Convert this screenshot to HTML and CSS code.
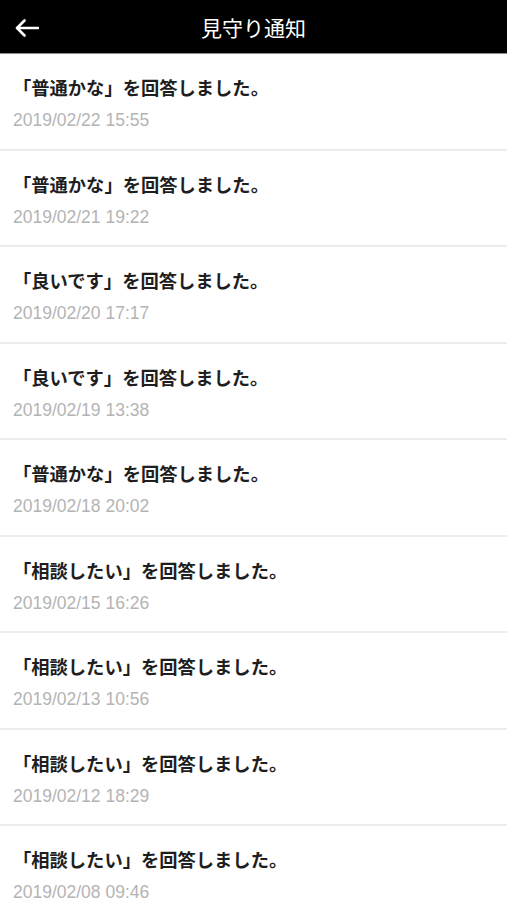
FILE: index.html
```html
<!DOCTYPE html>
<html lang="ja">
<head>
    <meta charset="UTF-8">
    <meta name="viewport" content="width=device-width, initial-scale=1.0">
    <title>見守り通知</title>
    <link rel="stylesheet" href="styles.css">
</head>
<body>
    <header class="app-bar">
        <span class="back">
            <svg width="24" height="18" viewBox="0 0 24 18">
                <path d="M23 9H2.5M9.5 1.5L2 9l7.5 7.5" fill="none" stroke="#fff" stroke-width="2.6" stroke-linecap="round" stroke-linejoin="round"/>
            </svg>
        </span>
        <h1 class="app-title">見守り通知</h1>
    </header>

    <ul class="notice-list">
        <li class="notice">
            <p class="notice-text">「普通かな」を回答しました。</p>
            <p class="notice-date">2019/02/22 15:55</p>
        </li>
        <li class="notice">
            <p class="notice-text">「普通かな」を回答しました。</p>
            <p class="notice-date">2019/02/21 19:22</p>
        </li>
        <li class="notice">
            <p class="notice-text">「良いです」を回答しました。</p>
            <p class="notice-date">2019/02/20 17:17</p>
        </li>
        <li class="notice">
            <p class="notice-text">「良いです」を回答しました。</p>
            <p class="notice-date">2019/02/19 13:38</p>
        </li>
        <li class="notice">
            <p class="notice-text">「普通かな」を回答しました。</p>
            <p class="notice-date">2019/02/18 20:02</p>
        </li>
        <li class="notice">
            <p class="notice-text">「相談したい」を回答しました。</p>
            <p class="notice-date">2019/02/15 16:26</p>
        </li>
        <li class="notice">
            <p class="notice-text">「相談したい」を回答しました。</p>
            <p class="notice-date">2019/02/13 10:56</p>
        </li>
        <li class="notice">
            <p class="notice-text">「相談したい」を回答しました。</p>
            <p class="notice-date">2019/02/12 18:29</p>
        </li>
        <li class="notice">
            <p class="notice-text">「相談したい」を回答しました。</p>
            <p class="notice-date">2019/02/08 09:46</p>
        </li>
    </ul>
</body>
</html>
```

FILE: styles.css
```css
body {
    margin: 0;
    padding: 0;
    background-color: #fff;
    color: #222;
    font-family: "Liberation Sans", "Noto Sans CJK JP", sans-serif;
}

.app-bar {
    position: relative;
    height: 53px;
    background-color: #000;
    border-bottom: 1px solid #8a8a8a;
    display: flex;
    align-items: center;
    justify-content: center;
}

.back {
    position: absolute;
    left: 15px;
    top: 19px;
    display: block;
    height: 18px;
}

.app-title {
    margin: 0;
    color: #fff;
    font-family: "Noto Sans CJK JP", sans-serif;
    font-size: 21px;
    font-weight: normal;
    line-height: 24px;
}

.notice-list {
    list-style: none;
    margin: 0;
    padding: 0;
}

.notice {
    height: 94.5px;
    padding: 0 13px;
    border-bottom: 2px solid #ececec;
    box-sizing: content-box;
}

.notice p {
    margin: 0;
}

.notice-text {
    padding-top: 21px;
    font-family: "Noto Sans CJK JP", sans-serif;
    font-size: 18.3px;
    font-weight: bold;
    line-height: 24px;
    color: #1e1e1e;
}

.notice-date {
    margin-top: 9px !important;
    font-size: 17.5px;
    line-height: 24px;
    color: #b4b4b4;
}
```
